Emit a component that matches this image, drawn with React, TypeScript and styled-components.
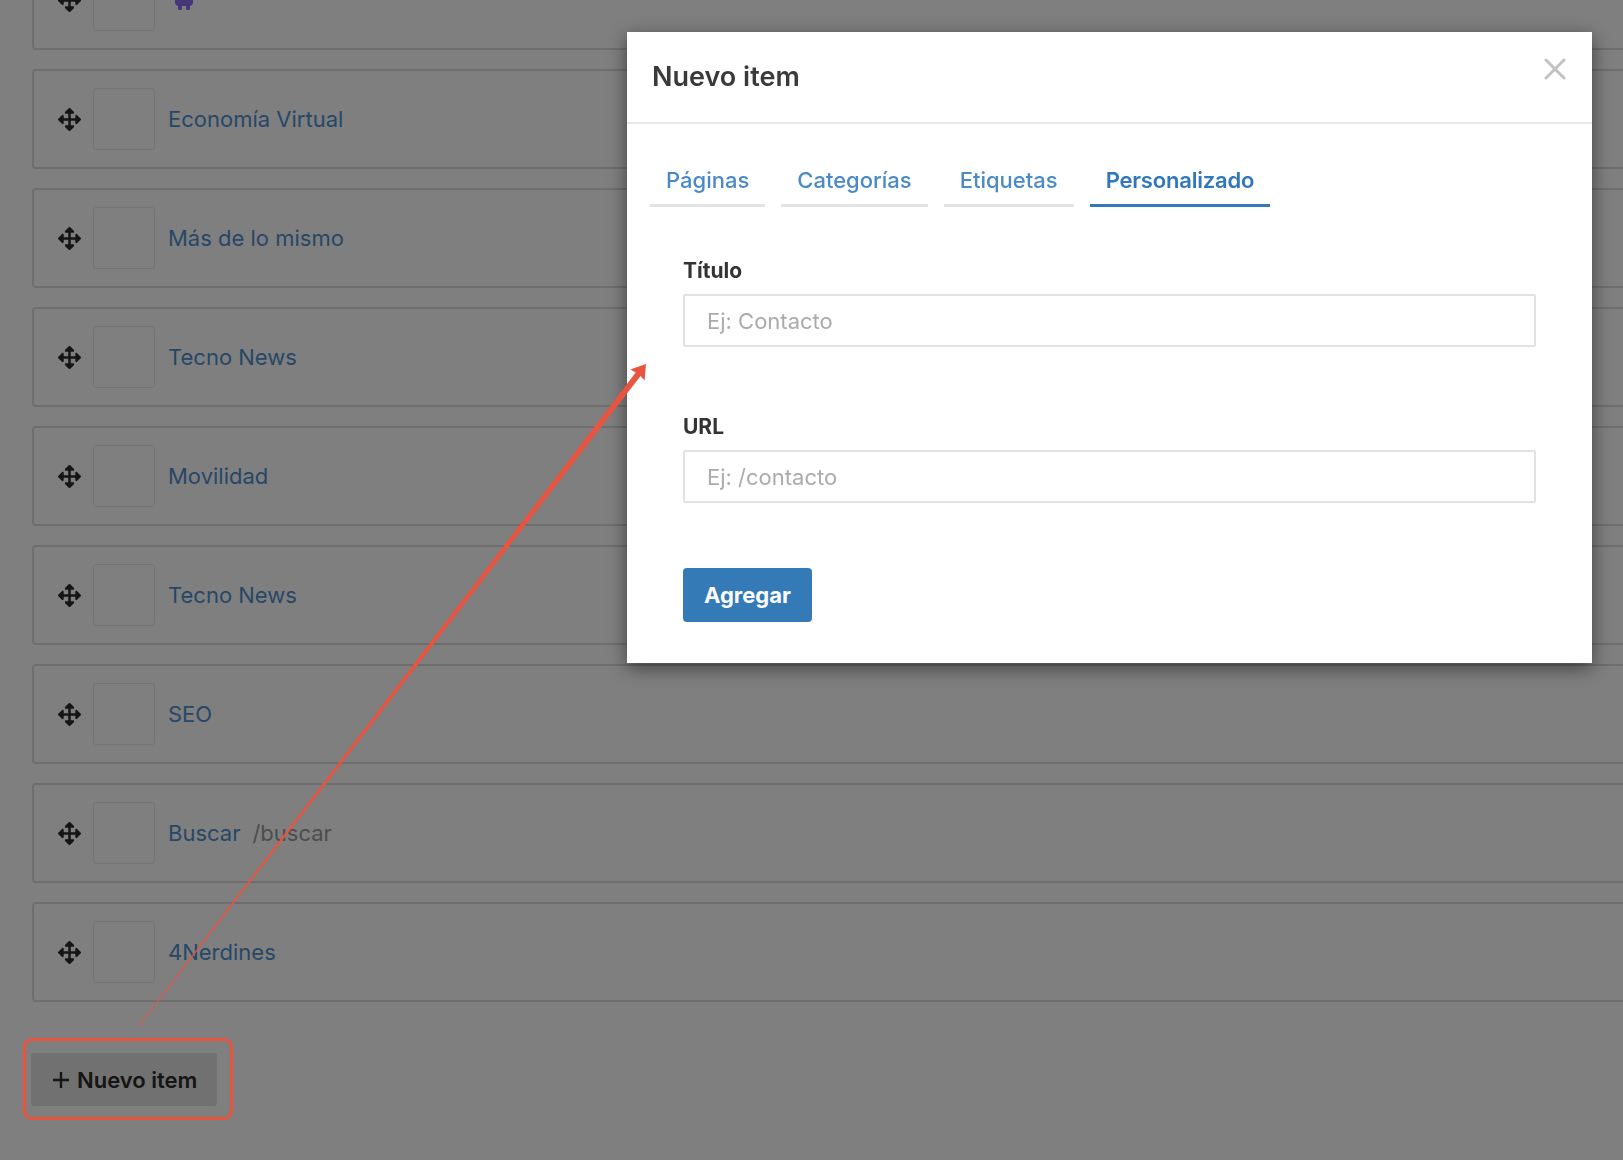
import React from 'react';
import styled, { createGlobalStyle } from 'styled-components';
import { FaArrowsAlt } from 'react-icons/fa';

const GlobalStyle = createGlobalStyle`
  html, body {
    margin: 0;
    padding: 0;
    background: #ffffff;
    overflow: hidden;
    font-family: Inter, "Noto Sans", "Liberation Sans", sans-serif;
  }
  * { box-sizing: border-box; }
`;

const Page = styled.div`
  height: 1160px;
  padding-left: 32px;
  overflow: hidden;
`;

const List = styled.div`
  display: flex;
  flex-direction: column;
  gap: 19px;
  margin-top: -50px;
`;

const Row = styled.div`
  display: flex;
  align-items: center;
  height: 100px;
  width: 1640px;
  border: 2px solid #dcdcdc;
  border-radius: 4px;
  padding-left: 23px;
  background: #fff;
`;

const Handle = styled.span`
  display: flex;
  width: 24px;
  justify-content: center;
  color: #2a2a2a;
  font-size: 23px;
`;

const Thumb = styled.div`
  width: 62px;
  height: 62px;
  margin-left: 12px;
  border: 1px solid #e8e8e8;
  border-radius: 3px;
  background: #fff;
`;

const ItemLabel = styled.span`
  margin-left: 13px;
  font-size: 22px;
  color: #4f8fcc;
`;

const ItemUrl = styled.span`
  margin-left: 12px;
  font-size: 22px;
  color: #9a9a9a;
`;

const ItemIcon = styled.span`
  margin-left: 18px;
  display: flex;
`;

const Footer = styled.div`
  margin-top: 51px;
`;

const ButtonWrap = styled.div`
  position: relative;
  display: inline-block;
  margin-left: -1px;
`;

const NewButton = styled.button`
  display: flex;
  align-items: center;
  gap: 6px;
  width: 186px;
  height: 53px;
  padding: 0 0 0 20px;
  border: none;
  border-radius: 3px;
  background: #e2e2e2;
  color: #2b2b2b;
  font-family: inherit;
  font-size: 22px;
  font-weight: 600;
`;

const Highlight = styled.div`
  position: absolute;
  top: -15px;
  left: -8px;
  right: -16px;
  bottom: -14px;
  border: 3px solid #e8543f;
  border-radius: 9px;
  z-index: 30;
  pointer-events: none;
`;

const Backdrop = styled.div`
  position: fixed;
  inset: 0;
  background: rgba(0, 0, 0, 0.5);
  z-index: 10;
`;

const Modal = styled.div`
  position: fixed;
  top: 32px;
  left: 627px;
  width: 965px;
  background: #fff;
  box-shadow: 0 5px 18px rgba(0, 0, 0, 0.5);
  z-index: 20;
`;

const ModalHeader = styled.div`
  display: flex;
  justify-content: space-between;
  align-items: flex-start;
  padding: 29px 26px 29px 25px;
  border-bottom: 2px solid #e8e8e8;
`;

const ModalTitle = styled.h4`
  margin: 0;
  font-size: 27px;
  line-height: 32px;
  font-weight: 600;
  color: #3a3a3a;
`;

const CloseButton = styled.button`
  display: flex;
  margin-top: -3px;
  padding: 0;
  border: none;
  background: none;
`;

const ModalBody = styled.div`
  padding: 31px 23px 41px 23px;
`;

const Tabs = styled.div`
  display: flex;
  gap: 16px;
`;

const Tab = styled.div<{ $active?: boolean }>`
  padding: 12px 16px 11px 16px;
  font-size: 22px;
  line-height: 26px;
  font-weight: ${(p) => (p.$active ? 600 : 500)};
  letter-spacing: ${(p) => (p.$active ? '-0.2px' : '0')};
  color: ${(p) => (p.$active ? '#2f78bb' : '#4a8ac6')};
  border-bottom: 3px solid ${(p) => (p.$active ? '#3479b7' : '#e3e3e3')};
`;

const TabContent = styled.div`
  padding: 51px 33px 0 33px;
`;

const FormGroup = styled.div<{ $gap: number }>`
  margin-bottom: ${(p) => p.$gap}px;
`;

const Label = styled.label`
  display: block;
  margin-bottom: 11px;
  font-size: 21px;
  line-height: 25px;
  font-weight: 700;
  color: #333;
`;

const Input = styled.input`
  display: block;
  width: 100%;
  height: 53px;
  padding: 0 22px;
  border: 2px solid #e2e2e2;
  border-radius: 2px;
  font-family: inherit;
  font-size: 22px;
  color: #333;
  outline: none;
  &::placeholder {
    color: #ababab;
  }
`;

const SubmitButton = styled.button`
  width: 129px;
  height: 54px;
  border: none;
  border-radius: 4px;
  background: #337ab7;
  color: #fff;
  font-family: inherit;
  font-size: 22px;
  font-weight: 700;
`;

const Annotation = styled.svg`
  position: fixed;
  inset: 0;
  width: 1623px;
  height: 1160px;
  z-index: 40;
  pointer-events: none;
`;

type Item = { label?: string; url?: string; icon?: boolean };

const items: Item[] = [
  { icon: true },
  { label: 'Economía Virtual' },
  { label: 'Más de lo mismo' },
  { label: 'Tecno News' },
  { label: 'Movilidad' },
  { label: 'Tecno News' },
  { label: 'SEO' },
  { label: 'Buscar', url: '/buscar' },
  { label: '4Nerdines' },
];

const PurpleIcon = () => (
  <svg width="22" height="24" viewBox="0 0 22 24">
    <rect x="2" y="4" width="18" height="14" rx="4" fill="#8a6cf0" />
    <rect x="5" y="17" width="4" height="5" rx="1.5" fill="#8a6cf0" />
    <rect x="13" y="17" width="4" height="5" rx="1.5" fill="#8a6cf0" />
  </svg>
);

const CloseIcon = () => (
  <svg width="22" height="22" viewBox="0 0 22 22">
    <path d="M2 2 L20 20 M20 2 L2 20" stroke="#c2c2c2" strokeWidth="3" strokeLinecap="round" />
  </svg>
);

const PlusIcon = () => (
  <svg width="20" height="20" viewBox="0 0 20 20">
    <path d="M10 2 V18 M2 10 H18" stroke="#2b2b2b" strokeWidth="2.4" />
  </svg>
);

export default function App() {
  return (
    <>
      <GlobalStyle />
      <Page>
        <List>
          {items.map((it, i) => (
            <Row key={i}>
              <Handle>
                <FaArrowsAlt />
              </Handle>
              <Thumb />
              {it.icon && (
                <ItemIcon>
                  <PurpleIcon />
                </ItemIcon>
              )}
              {it.label && <ItemLabel>{it.label}</ItemLabel>}
              {it.url && <ItemUrl>{it.url}</ItemUrl>}
            </Row>
          ))}
        </List>
        <Footer>
          <ButtonWrap>
            <NewButton>
              <PlusIcon />
              Nuevo item
            </NewButton>
            <Highlight />
          </ButtonWrap>
        </Footer>
      </Page>
      <Backdrop />
      <Modal>
        <ModalHeader>
          <ModalTitle>Nuevo item</ModalTitle>
          <CloseButton aria-label="Cerrar">
            <CloseIcon />
          </CloseButton>
        </ModalHeader>
        <ModalBody>
          <Tabs>
            <Tab>Páginas</Tab>
            <Tab>Categorías</Tab>
            <Tab>Etiquetas</Tab>
            <Tab $active>Personalizado</Tab>
          </Tabs>
          <TabContent>
            <FormGroup $gap={67}>
              <Label>Título</Label>
              <Input placeholder="Ej: Contacto" />
            </FormGroup>
            <FormGroup $gap={65}>
              <Label>URL</Label>
              <Input placeholder="Ej: /contacto" />
            </FormGroup>
            <SubmitButton>Agregar</SubmitButton>
          </TabContent>
        </ModalBody>
      </Modal>
      <Annotation viewBox="0 0 1623 1160">
        <polygon
          points="138.3,1027.2 640.5,376.1 644.6,380.6 646,364 630.4,369.6 635.7,372.5 137.7,1026.8"
          fill="#e8543f"
        />
      </Annotation>
    </>
  );
}
